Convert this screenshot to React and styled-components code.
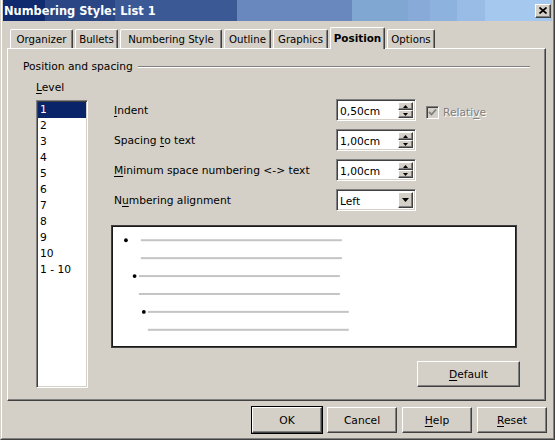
import React from "react";
import styled, { createGlobalStyle } from "styled-components";

const GlobalStyle = createGlobalStyle`
  html, body { margin: 0; padding: 0; background: #d4d0c8; }
  body { font-family: "DejaVu Sans", "Liberation Sans", sans-serif; font-size: 10.7px; color: #000; }
  * { box-sizing: border-box; }
`;

const Window = styled.div`
  width: 555px;
  height: 440px;
  background: #d4d0c8;
  border-left: 1px solid #d4d0c8;
  border-right: 1px solid #404040;
  border-bottom: 1px solid #404040;
  display: flex;
`;

const WindowInner = styled.div`
  flex: 1;
  border-left: 1px solid #fff;
  border-right: 1px solid #808080;
  border-bottom: 1px solid #808080;
  padding: 0 1px 1px;
  display: flex;
  flex-direction: column;
`;

const TitleBar = styled.div`
  height: 21px;
  display: flex;
  align-items: center;
  justify-content: space-between;
  padding: 1px 1px 0 1px;
  background: linear-gradient(90deg,
    #0f2a6f 0, #0f2a6f 42px,
    #2a4684 42px, #2a4684 112px,
    #3b5a95 112px, #3b5a95 234px,
    #6888be 234px, #6888be 349px,
    #80a6d2 349px, #80a6d2 405px,
    #88aad8 405px, #88aad8 427px,
    #8eb2de 427px, #8eb2de 454px,
    #98bce6 454px, #98bce6 482px,
    #a4c8ee 482px);
`;

const TitleText = styled.span`
  color: #fff;
  font-weight: bold;
  font-size: 11.4px;
  line-height: 13px;
`;

const CloseButton = styled.div`
  width: 16px;
  height: 14px;
  margin-top: -1px;
  background: #d4d0c8;
  border: 1px solid;
  border-color: #fff #404040 #404040 #fff;
  box-shadow: inset -1px -1px #808080;
  display: flex;
  align-items: center;
  justify-content: center;
`;

const Body = styled.div`
  padding: 6px 6px 0 4px;
  display: flex;
  flex-direction: column;
`;

const TabStrip = styled.div`
  display: flex;
  align-items: flex-end;
  height: 21px;
  padding-left: 3px;
  gap: 2px;
`;

const Tab = styled.div`
  position: relative;
  z-index: ${p => (p.$active ? 2 : 1)};
  width: ${p => p.$w}px;
  height: ${p => (p.$active ? 22 : 19)}px;
  margin-bottom: ${p => (p.$active ? -1 : 0)}px;
  padding: ${p => (p.$active ? 0 : 1)}px 0 ${p => (p.$active ? 2 : 0)}px;
  display: flex;
  align-items: center;
  justify-content: center;
  background: #d4d0c8;
  border-top: 1px solid #fff;
  border-left: 1px solid #fff;
  border-right: 1px solid #404040;
  border-radius: 2px 2px 0 0;
  box-shadow: inset -1px 0 #808080;
  font-size: ${p => (p.$active ? 10.4 : 10.2)}px;
  font-weight: ${p => (p.$active ? "bold" : "normal")};
  white-space: nowrap;
`;

const Panel = styled.div`
  height: 353px;
  background: #d4d0c8;
  border: 1px solid;
  border-color: #fff #404040 #404040 #fff;
  box-shadow: inset -1px -1px #808080;
  padding: 11px 15px 0 15px;
  display: flex;
  flex-direction: column;
`;

const GroupHeader = styled.div`
  display: flex;
  align-items: center;
  height: 13px;
  line-height: 13px;
  gap: 5px;
`;

const GroupRule = styled.div`
  flex: 1;
  height: 2px;
  border-top: 1px solid #808080;
  border-bottom: 1px solid #fff;
`;

const Content = styled.div`
  display: flex;
  gap: 23px;
  margin-top: 7px;
  padding-left: 13px;
`;

const LevelColumn = styled.div`
  display: flex;
  flex-direction: column;
  gap: 6px;
  width: 52px;
`;

const Label = styled.div`
  line-height: 13px;
  padding-top: 1px;
  white-space: nowrap;
`;

const ListBox = styled.div`
  height: 288px;
  background: #fff;
  border: 1px solid;
  border-color: #808080 #fff #fff #808080;
  box-shadow: inset 1px 1px #404040, inset -1px -1px #d4d0c8;
  padding: 1px;
  display: flex;
  flex-direction: column;
`;

const ListItem = styled.div`
  height: 16px;
  line-height: 16px;
  padding: 0 0 0 2px;
  background: ${p => (p.$selected ? "#0a246a" : "transparent")};
  color: ${p => (p.$selected ? "#fff" : "#000")};
  white-space: nowrap;
`;

const RightColumn = styled.div`
  width: 409px;
  padding-top: 19px;
  display: flex;
  flex-direction: column;
`;

const FormRows = styled.div`
  display: flex;
  flex-direction: column;
  gap: 8px;
`;

const FormRow = styled.div`
  display: flex;
  align-items: flex-start;
  height: 22px;
`;

const RowLabel = styled.div`
  width: 225px;
  padding: 1px 0 0 3px;
  line-height: 22px;
  white-space: nowrap;
`;

const Field = styled.div`
  width: 80px;
  height: 22px;
  background: #fff;
  border: 1px solid;
  border-color: #808080 #fff #fff #808080;
  box-shadow: inset 1px 1px #404040, inset -1px -1px #d4d0c8;
  padding: 2px;
  display: flex;
  align-items: stretch;
`;

const FieldText = styled.span`
  flex: 1;
  line-height: 18px;
  padding: 1px 0 0 1px;
`;

const SpinColumn = styled.div`
  width: 15px;
  display: flex;
  flex-direction: column;
`;

const BevelButton = styled.div`
  flex: 1;
  background: #d4d0c8;
  border: 1px solid;
  border-color: #fff #404040 #404040 #fff;
  box-shadow: inset -1px -1px #808080;
  display: flex;
  align-items: center;
  justify-content: center;
`;

const CheckGroup = styled.div`
  display: flex;
  align-items: center;
  gap: 4px;
  margin-left: 10px;
  margin-top: 7px;
  color: #808080;
  text-shadow: 1px 1px 0 #fff;
  line-height: 13px;
`;

const CheckBox = styled.div`
  width: 13px;
  height: 13px;
  background: #d4d0c8;
  border: 1px solid;
  border-color: #808080 #fff #fff #808080;
  box-shadow: inset 1px 1px #404040, inset -1px -1px #d4d0c8;
  display: flex;
  align-items: center;
  justify-content: center;
`;

const Preview = styled.div`
  margin-top: 14px;
  width: 406px;
  height: 123px;
  background: #fff;
  border: 1px solid #404040;
  box-shadow: inset 0 0 0 1px #1a1a1a;
  padding: 2px;
  display: flex;
`;

const DefaultRow = styled.div`
  display: flex;
  justify-content: flex-end;
  margin-top: 13px;
`;

const Button = styled.div`
  width: ${p => p.$w || 70}px;
  height: 26px;
  background: #d4d0c8;
  border: 1px solid;
  border-color: #fff #404040 #404040 #fff;
  box-shadow: inset -1px -1px #808080;
  display: flex;
  align-items: center;
  justify-content: center;
  padding-top: 1px;
  line-height: 13px;
  outline: ${p => (p.$default ? "1px solid #000" : "none")};
  outline-offset: 0;
`;

const ButtonRow = styled.div`
  display: flex;
  justify-content: flex-end;
  gap: 5px;
  margin-top: 6px;
  padding-right: 5px;
`;

const U = styled.span`
  text-decoration: underline;
  text-underline-offset: 2px;
`;

const tabs = [
  { label: "Organizer", w: 63 },
  { label: "Bullets", w: 43 },
  { label: "Numbering Style", w: 102 },
  { label: "Outline", w: 47 },
  { label: "Graphics", w: 55 },
  { label: "Position", w: 55, active: true },
  { label: "Options", w: 48 },
];
const levels = ["1", "2", "3", "4", "5", "6", "7", "8", "9", "10", "1 - 10"];

const UpArrow = () => (
  <svg width="5" height="3" viewBox="0 0 5 3"><path d="M2.5 0 L5 3 L0 3 Z" fill="#000" /></svg>
);
const DownArrow = ({ w = 5, h = 3 }) => (
  <svg width={w} height={h} viewBox={`0 0 ${w} ${h}`}><path d={`M0 0 L${w} 0 L${w / 2} ${h} Z`} fill="#000" /></svg>
);

const SpinField = ({ value }) => (
  <Field>
    <FieldText>{value}</FieldText>
    <SpinColumn>
      <BevelButton><UpArrow /></BevelButton>
      <BevelButton><DownArrow /></BevelButton>
    </SpinColumn>
  </Field>
);

const previewLines = [
  { bx: 12, by: 12, x: 27, y: 11, w: 202 },
  { x: 27, y: 29, w: 202 },
  { bx: 20.7, by: 48, x: 25, y: 47, w: 202 },
  { x: 25, y: 65, w: 202 },
  { bx: 30, by: 84, x: 34, y: 83, w: 202 },
  { x: 34, y: 101, w: 202 },
];

export default function App() {
  return (
    <>
      <GlobalStyle />
      <Window>
        <WindowInner>
          <TitleBar>
            <TitleText>Numbering Style: List 1</TitleText>
            <CloseButton>
              <svg width="8" height="7" viewBox="0 0 8 7">
                <path d="M0.5 0.5 L7.5 6.5 M7.5 0.5 L0.5 6.5" stroke="#000" strokeWidth="1.7" />
              </svg>
            </CloseButton>
          </TitleBar>
          <Body>
            <TabStrip>
              {tabs.map(t => (
                <Tab key={t.label} $w={t.w} $active={t.active}>{t.label}</Tab>
              ))}
            </TabStrip>
            <Panel>
              <GroupHeader>
                <span>Position and spacing</span>
                <GroupRule />
              </GroupHeader>
              <Content>
                <LevelColumn>
                  <Label><U>L</U>evel</Label>
                  <ListBox>
                    {levels.map((l, i) => (
                      <ListItem key={l} $selected={i === 0}>{l}</ListItem>
                    ))}
                  </ListBox>
                </LevelColumn>
                <RightColumn>
                  <FormRows>
                    <FormRow>
                      <RowLabel><U>I</U>ndent</RowLabel>
                      <SpinField value="0,50cm" />
                      <CheckGroup>
                        <CheckBox>
                          <svg width="9" height="9" viewBox="0 0 9 9">
                            <path d="M1 4 L3.5 6.5 L8 1.5" stroke="#808080" strokeWidth="1.8" fill="none" />
                          </svg>
                        </CheckBox>
                        <span>Relati<U>v</U>e</span>
                      </CheckGroup>
                    </FormRow>
                    <FormRow>
                      <RowLabel>Spacing <U>t</U>o text</RowLabel>
                      <SpinField value="1,00cm" />
                    </FormRow>
                    <FormRow>
                      <RowLabel><U>M</U>inimum space numbering &lt;-&gt; text</RowLabel>
                      <SpinField value="1,00cm" />
                    </FormRow>
                    <FormRow>
                      <RowLabel>N<U>u</U>mbering alignment</RowLabel>
                      <Field>
                        <FieldText>Left</FieldText>
                        <SpinColumn>
                          <BevelButton><DownArrow w={7} h={4} /></BevelButton>
                        </SpinColumn>
                      </Field>
                    </FormRow>
                  </FormRows>
                  <Preview>
                    <svg width="402" height="119" viewBox="0 0 402 119">
                      {previewLines.map((l, i) => (
                        <g key={i}>
                          {l.bx !== undefined && <circle cx={l.bx} cy={l.by} r="1.9" fill="#000" />}
                          <rect x={l.x} y={l.y} width={l.w} height="2" fill="#c4c4c4" />
                        </g>
                      ))}
                    </svg>
                  </Preview>
                  <DefaultRow>
                    <Button $w={103}><span><U>D</U>efault</span></Button>
                  </DefaultRow>
                </RightColumn>
              </Content>
            </Panel>
          </Body>
          <ButtonRow>
            <Button $default>OK</Button>
            <Button>Cancel</Button>
            <Button><span><U>H</U>elp</span></Button>
            <Button><span><U>R</U>eset</span></Button>
          </ButtonRow>
        </WindowInner>
      </Window>
    </>
  );
}
